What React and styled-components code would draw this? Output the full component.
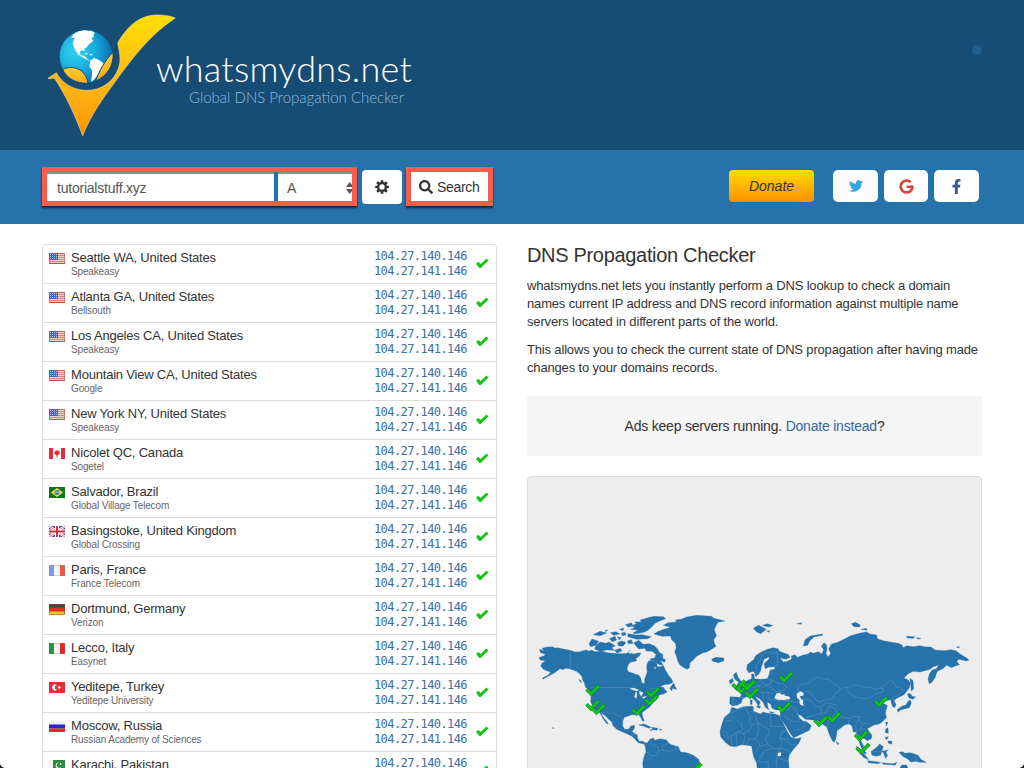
import React from 'react';
import styled, { createGlobalStyle } from 'styled-components';
import { FaTwitter, FaGoogle, FaFacebookF, FaSearch } from 'react-icons/fa';

const GlobalStyle = createGlobalStyle`
  * { box-sizing: border-box; }
  html, body { margin: 0; height: 768px; overflow: hidden; background: #111; }
  body { font-family: "Liberation Sans", Arial, sans-serif; font-size: 13px; color: #333; }
`;

const Page = styled.div`
  height: 768px;
  overflow: hidden;
  background: #fff;
  border-radius: 0 0 5px 5px;
`;

const Header = styled.header`
  height: 150px;
  padding: 0 42px 0 40px;
  display: flex;
  background: #174d74;
`;

const Logo = styled.svg`
  width: 145px;
  height: 150px;
  margin-right: -29px;
  flex: none;
`;

const Brand = styled.div`
  padding-top: 48px;
  font-family: Lato, "Open Sans", sans-serif;
  font-weight: 300;
`;

const BrandName = styled.div`
  width: 260px;
  white-space: nowrap;
  font-size: 36px;
  line-height: 41px;
  letter-spacing: 0.25px;
  color: #fff;
`;

const Tagline = styled.div`
  padding-left: 33px;
  white-space: nowrap;
  font-size: 15px;
  line-height: 16px;
  letter-spacing: 0;
  color: #8db9de;
`;

const Dot = styled.span`
  width: 10px;
  height: 10px;
  margin: 45px 0 0 auto;
  border-radius: 50%;
  background: #1f5f8f;
`;

const SearchBar = styled.div`
  height: 74px;
  padding: 17px 45px 0 42px;
  display: flex;
  align-items: flex-start;
  background: #2672aa;
`;

const Highlight = styled.div`
  width: ${(p) => p.$width}px;
  height: 39px;
  display: flex;
  gap: 4px;
  border: 5px solid #fb5b4c;
  box-shadow: 0 2px 2px rgba(0, 15, 35, 0.8);
`;

const Field = styled.div`
  width: ${(p) => p.$width}px;
  height: 29px;
  padding: 2px 0 0 ${(p) => p.$pad}px;
  display: flex;
  align-items: center;
  justify-content: space-between;
  background: #fff;
  box-shadow: inset 0 2px 1px #8a8a8a;
  font-size: 14px;
  letter-spacing: -0.22px;
  color: #555;
`;

const Arrows = styled.svg`
  width: 6px;
  height: 14px;
`;

const GearButton = styled.button`
  width: 40px;
  height: 34px;
  margin: 3px 4px 0 5px;
  padding: 0 0 1px;
  display: grid;
  place-items: center;
  border: 0;
  border-radius: 4px;
  background: #fff;
`;

const SearchButton = styled.button`
  width: 77px;
  height: 29px;
  padding: 0 0 0 8px;
  display: flex;
  align-items: center;
  gap: 4px;
  border: 0;
  background: #fff;
  font: 14px "Liberation Sans", Arial, sans-serif;
  letter-spacing: -0.3px;
  color: #333;
`;

const Donate = styled.button`
  width: 85px;
  height: 32px;
  margin: 3px 19px 0 auto;
  border: 0;
  border-radius: 4px;
  background: linear-gradient(#ffdc00, #ff9000);
  font: italic 14px "Liberation Sans", Arial, sans-serif;
  color: #333;
`;

const Social = styled.div`
  margin-top: 3px;
  display: flex;
  gap: 6px;
`;

const SocialButton = styled.a`
  width: ${(p) => p.$width || 45}px;
  height: 32px;
  display: grid;
  place-items: center;
  border-radius: 5px;
  background: #fff;
  color: ${(p) => p.$color};
  font-size: 16px;
`;

const Content = styled.main`
  padding: 20px 42px 0;
  display: flex;
  gap: 30px;
`;

const ServerList = styled.ul`
  width: 455px;
  margin: 0;
  padding: 0;
  list-style: none;
  border: 1px solid #ddd;
  border-radius: 4px;
`;

const ServerRow = styled.li`
  height: 39px;
  padding: 4px 7px 0 6px;
  display: flex;
  border-bottom: 1px solid #ddd;
`;

const Flag = styled.svg`
  width: 16px;
  height: 11px;
  margin: 4px 6px 0 0;
  flex: none;
`;

const Place = styled.div`
  flex: 1;
  line-height: 18px;
  font-size: 13px;
  letter-spacing: -0.2px;
  white-space: nowrap;
`;

const Provider = styled.div`
  font-size: 10px;
  line-height: 11px;
  margin-top: -1px;
  letter-spacing: -0.15px;
  color: #666;
`;

const Addresses = styled.div`
  font-family: "DejaVu Sans Mono", monospace;
  font-size: 12px;
  line-height: 15px;
  letter-spacing: -0.58px;
  color: #3a6ea5;
`;

const ListCheck = styled.svg`
  width: 13px;
  height: 11px;
  margin: 9px 0 0 9px;
`;

const Info = styled.section`
  width: 455px;
`;

const Title = styled.h1`
  margin: 0 0 11px;
  font-size: 20px;
  font-weight: 400;
  line-height: 22px;
  letter-spacing: -0.32px;
  color: #333;
`;

const Paragraph = styled.p`
  margin: 0 0 10px;
  font-size: 13px;
  line-height: 18px;
  letter-spacing: -0.165px;
  white-space: nowrap;
`;

const Notice = styled.div`
  height: 60px;
  margin: 19px 0 20px;
  display: flex;
  align-items: center;
  justify-content: center;
  background: #f5f5f5;
  font-size: 14px;
  letter-spacing: -0.21px;
  white-space: pre;
`;

const Link = styled.a`
  color: #3465a4;
`;

const MapPanel = styled.div`
  height: 400px;
  border: 1px solid #ddd;
  border-radius: 4px;
  background: #ededed;
  overflow: hidden;
`;

const MapSvg = styled.svg`
  display: block;
  width: 453px;
  height: 291px;
`;

const flagArt = {
  us: (
    <>
      <rect width="16" height="11" fill="#fff" />
      <path d="M0 .8H16M0 2.8H16M0 4.8H16M0 6.8H16M0 8.8H16M0 10.5H16" stroke="#d8534b" />
      <rect width="9" height="7" fill="#3d66cf" />
      <path d="M1 1.5H9M1 3.5H9M1 5.5H9" stroke="#cbdcff" strokeWidth=".8" strokeDasharray="1 1" />
      <rect x=".5" y=".5" width="15" height="10" fill="none" stroke="#a65243" strokeOpacity=".55" />
    </>
  ),
  ca: (
    <>
      <rect width="16" height="11" fill="#d9303b" />
      <rect x="4" width="8" height="11" fill="#fff" />
      <path d="M8 1.5l1 1.7 1.8-.5-.6 2 .8.7-2.4 1.8-.3 2h-.6l-.3-2L5 5.400l.8-.7-.6-2 1.800.5z" fill="#e52b35" />
    </>
  ),
  br: (
    <>
      <rect width="16" height="11" fill="#12751d" />
      <path d="M8 1l6 4.500-6 4.500-6-4.500z" fill="#eee438" />
      <circle cx="8" cy="5.500" r="2.500" fill="#3e7cbb" />
      <path d="M6 5q2-.7 4 1" stroke="#fff" strokeWidth=".6" fill="none" />
    </>
  ),
  gb: (
    <>
      <rect width="16" height="11" fill="#41549d" />
      <path d="M0 0L16 11M16 0L0 11" stroke="#fff" strokeWidth="2.400" />
      <path d="M0 0L16 11M16 0L0 11" stroke="#da4b55" strokeWidth=".8" />
      <path d="M8 0V11M0 5.500H16" stroke="#fff" strokeWidth="4" />
      <path d="M8 0V11M0 5.500H16" stroke="#d52b3b" strokeWidth="2" />
    </>
  ),
  fr: (
    <>
      <rect width="16" height="11" fill="#f4f4f4" />
      <rect width="5" height="11" fill="#7b9be5" />
      <rect x="11" width="5" height="11" fill="#ef5645" />
      <rect x=".5" y=".5" width="15" height="10" fill="none" stroke="#888" strokeOpacity=".3" />
    </>
  ),
  de: (
    <>
      <rect width="16" height="11" fill="#444" />
      <rect y="3.500" width="16" height="4" fill="#e52c20" />
      <rect y="7.500" width="16" height="3.500" fill="#f3c429" />
      <rect x=".5" y=".5" width="15" height="10" fill="none" stroke="#8b4932" strokeOpacity=".5" />
    </>
  ),
  it: (
    <>
      <rect width="16" height="11" fill="#f4f4f4" />
      <rect width="5" height="11" fill="#239637" />
      <rect x="11" width="5" height="11" fill="#e52621" />
      <rect x=".5" y=".5" width="15" height="10" fill="none" stroke="#777" strokeOpacity=".3" />
    </>
  ),
  tr: (
    <>
      <rect width="16" height="11" fill="#e82c31" />
      <path d="M8 3.200A3 3 0 1 0 8 7.800A2.300 2.300 0 1 1 8 3.200" fill="#fff" />
      <circle cx="10.300" cy="5.500" r="1.300" fill="#fff" />
    </>
  ),
  ru: (
    <>
      <rect width="16" height="11" fill="#ececec" />
      <rect y="3.500" width="16" height="4" fill="#2325df" />
      <rect y="7.500" width="16" height="3.500" fill="#e52828" />
    </>
  ),
  pk: (
    <>
      <rect width="16" height="11" fill="#2d8b3b" />
      <rect width="4" height="11" fill="#eee" />
      <path d="M10 2.500A3 3 0 1 0 12.500 6.500A2.600 2.600 0 1 1 10 2.500" fill="#fff" />
      <circle cx="11.500" cy="4" r=".9" fill="#fff" />
    </>
  ),
};

const servers = [
  ['us', 'Seattle WA, United States', 'Speakeasy'],
  ['us', 'Atlanta GA, United States', 'Bellsouth'],
  ['us', 'Los Angeles CA, United States', 'Speakeasy'],
  ['us', 'Mountain View CA, United States', 'Google'],
  ['us', 'New York NY, United States', 'Speakeasy'],
  ['ca', 'Nicolet QC, Canada', 'Sogetel'],
  ['br', 'Salvador, Brazil', 'Global Village Telecom'],
  ['gb', 'Basingstoke, United Kingdom', 'Global Crossing'],
  ['fr', 'Paris, France', 'France Telecom'],
  ['de', 'Dortmund, Germany', 'Verizon'],
  ['it', 'Lecco, Italy', 'Easynet'],
  ['tr', 'Yeditepe, Turkey', 'Yeditepe University'],
  ['ru', 'Moscow, Russia', 'Russian Academy of Sciences'],
  ['pk', 'Karachi, Pakistan', ''],
];

const pins = [
  [593, 690], [593, 705], [598.500, 709], [653, 692], [651.500, 700], [638.500, 710],
  [739, 685], [743, 688], [749, 685], [752, 693], [786, 677], [784, 707],
  [821, 721], [834, 717], [695, 768], [881, 701.500], [861.500, 735.500], [863, 748.500],
];

function BrandLogo() {
  return (
    <Logo viewBox="30 0 435 450">
      <defs>
        <linearGradient id="gold" x1="0" y1="0" x2="0" y2="1">
          <stop offset="0" stopColor="#ffdf00" />
          <stop offset=".55" stopColor="#ffb818" />
          <stop offset="1" stopColor="#ff9400" />
        </linearGradient>
        <linearGradient id="patch" x1="0" y1="0" x2="0" y2="1">
          <stop offset="0" stopColor="#ffcf28" />
          <stop offset="1" stopColor="#ffa81e" />
        </linearGradient>
        <radialGradient id="ocean" cx=".3" cy=".4" r=".75">
          <stop offset="0" stopColor="#32d5ee" />
          <stop offset=".55" stopColor="#16a7db" />
          <stop offset="1" stopColor="#0865a8" />
        </radialGradient>
      </defs>
      <circle cx="168" cy="169" r="79" fill="url(#ocean)" />
      <path fill="#fff" d="M130 103L146 94 166 91 176 93 174 100 188 102 192 112 184 113 190 123 178 131 171 141 163 146 164 154 155 150 149 157 153 166 163 167 173 178 182 183 174 181 160 173 145 164 133 145 128 128 135 113 124 114zM165 94L184 92 194 98 190 107 179 104zM181 182L191 174 203 178 212 184 221 190 217 203 209 211 205 222 192 239 183 246 186 226 186 211 178 199zM162 159L174 160 171 164zM177 161L188 163 184 167z" />
      <path d="M98 208C128 195 166 204 174 250C140 251 110 236 98 208z" fill="url(#patch)" stroke="#124c77" strokeWidth="3" />
      <path d="M249 157C253 198 229 229 197 243C207 213 227 178 249 157z" fill="url(#patch)" stroke="#124c77" strokeWidth="3" />
      <path
        d="M54 235L79 218C97 251 132 271 171 271C226 271 269 228 270 177C270 157 265 144 263 129C293 77 330 45 381 45C404 45 425 49 436 54C358 105 304 178 244 261C202 318 172 368 158 408C139 353 104 279 74 236C67 230 61 241 54 235z"
        fill="url(#gold)"
        stroke="#ffe79a"
        strokeWidth="1.500"
      />
    </Logo>
  );
}

function Gear() {
  return (
    <svg width="14" height="14" viewBox="-7 -7 14 14">
      {[0, 45, 90, 135].map((a) => (
        <rect key={a} x="-1.350" y="-6.800" width="2.700" height="13.600" rx=".5" fill="#333" transform={`rotate(${a})`} />
      ))}
      <circle r="5" fill="#333" />
      <circle r="2.700" fill="#fff" />
    </svg>
  );
}

function WorldMap() {
  return (
    <MapSvg viewBox="528 477 453 291">
      {/* The Americas and Greenland */}
      <g transform="translate(520 600) scale(.33333)">
        <g fill="#2672aa" stroke="#2672aa" strokeWidth="1" strokeLinejoin="round">
          <path d="M58 148L72 152 66 145 78 142 98 140 104 144 112 143 130 147 150 151 165 156 180 155 188 152 200 150 206 154 214 150 225 155 245 153 262 158 280 160 300 161 322 160 328 150 336 158 340 162 352 160 362 158 360 166 355 170 345 178 334 183 325 194 321 206 325 215 335 218 345 222 357 226 362 234 366 250 374 250 374 238 378 226 382 216 380 204 381 192 385 184 396 180 400 184 410 188 412 200 422 200 430 196 436 210 445 225 455 238 459 246 450 252 432 254 420 260 430 262 436 270 442 276 430 282 420 284 412 290 410 298 402 305 396 312 388 322 376 330 366 338 368 350 373 362 368 364 362 352 355 342 345 344 335 344 325 348 313 352 308 364 308 378 314 388 326 388 332 378 344 376 342 388 336 394 345 402 352 404 353 416 358 424 368 424 376 428 370 432 355 428 345 418 335 408 322 402 308 396 290 388 278 376 276 366 266 358 256 347 243 338 250 352 260 364 265 371 260 371 250 358 243 344 236 334 226 330 218 318 212 305 213 290 216 282 210 272 200 262 195 252 188 240 186 230 180 222 170 214 158 210 148 206 135 205 130 209 120 206 112 212 104 218 90 226 70 237 66 235 84 226 92 216 80 212 70 208 62 198 66 190 76 182 60 180 58 172 72 168 76 163 62 158z" />
          <path d="M372 430L382 428 390 418 400 414 404 421 420 416 440 420 446 430 455 434 475 440 482 456 500 458 520 466 536 478 540 492 532 510 370 510 368 490 372 470 378 456 376 440z" />
          <path d="M402 102L415 94 432 88 452 82 430 76 444 68 470 66 466 60 485 57 500 51 530 46 575 49 581 55 615 63 594 67 588 77 583 88 586 99 590 107 581 119 583 129 588 139 576 147 562 155 548 159 530 169 520 180 510 188 508 203 502 208 492 203 480 195 473 183 470 170 464 156 469 143 466 130 455 119 451 108 427 109z" />
          <path d="M384 53L402 49 430 50 437 56 420 62 405 70 396 80 385 90 372 97 348 101 338 99 354 91 331 88 346 82 332 78 350 71 344 66 364 65 360 60z" />
          <path d="M316 74L334 68 338 76 326 82zM298 88L312 84 309 92zM220 104L240 94 260 99 240 107zM256 91L264 90 257 95zM271 98L288 95 300 102 281 106zM304 99L315 97 318 105 306 107zM324 101L348 105 366 104 394 110 383 116 350 118 323 110zM268 116L285 109 290 120 277 125zM292 110L304 113 298 120zM207 131L216 117 236 124 229 136 212 140zM226 140L240 126 258 130 268 126 286 138 275 143 284 151 260 150 240 154 224 147zM292 128L304 123 318 127 310 138 296 138zM322 123L334 119 339 130 326 132zM284 151L301 145 306 153 291 159zM341 129L356 121 370 133 388 131 404 138 412 146 418 157 429 164 428 174 437 180 433 187 420 181 429 194 420 195 402 184 389 176 404 174 408 163 396 154 379 153 374 145 356 147zM330 170L346 173 350 182 333 187zM176 238L184 243 183 248zM193 252L211 269 198 263zM449 265L461 249 470 269 458 265 455 272zM356 375L372 372 394 382 387 385 369 378zM396 382L414 385 411 391 397 389zM417 388L424 387 424 391zM389 389L397 389 394 392zM98 382L102 384 99 387z" />
        </g>
        <g fill="#ededed">
          <path d="M328 266L340 263 357 269 350 274zM346 278L351 276 350 295 343 292zM358 272L370 278 364 289 358 281zM365 291L382 288 386 284 371 296zM401 199L408 204 406 208zM325 151L337 155 340 160 326 160z" />
        </g>
        <path fill="none" stroke="#80acd0" strokeWidth="1" d="M151 152V206L164 212 184 228M209 262H326L344 266 358 271M243 338L260 336 270 341 281 339 292 347 302 350 311 364M390 267L404 265 414 272 423 260M337 408L341 398 351 398M388 420L398 436 412 438 416 452 409 468 386 464M416 452L428 451 426 438 446 430M428 451L446 455 466 448 466 437M466 448L480 447M380 480L396 475 404 464M376 455L388 460" />
      </g>

      {/* Europe, Africa and Asia */}
      <g transform="translate(680 600) scale(.33333)">
        <g fill="#2672aa" stroke="#2672aa" strokeWidth="1" strokeLinejoin="round">
          <path d="M150 290L180 292 184 285 182 275 165 262 178 257 190 250 205 240 215 236 215 222 222 222 224 236 240 238 262 236 268 222 270 210 284 208 284 200 265 202 256 206 252 200 253 190 266 178 268 170 252 178 246 196 246 206 236 222 228 230 222 214 206 218 200 208 202 194 222 178 226 168 240 158 262 148 280 143 294 146 298 154 326 164 330 172 318 178 300 174 310 186 322 184 335 177 334 168 345 164 352 172 370 165 385 162 390 156 400 160 415 155 425 162 431 149 424 139 432 128 440 135 441 148 438 161 445 171 452 160 446 147 454 132 470 128 492 118 510 108 530 102 545 98 560 96 570 102 590 105 592 116 610 122 630 126 655 130 665 134 670 143 680 137 700 140 720 137 738 141 753 141 765 150 795 152 812 149 828 152 840 162 860 174 867 180 859 183 837 178 830 184 838 194 825 198 815 203 800 196 788 206 772 214 768 224 766 232 756 246 748 252 744 238 748 222 756 210 769 206 776 196 760 200 750 208 735 212 720 216 700 214 685 221 672 234 685 240 691 250 688 263 681 273 672 284 660 290 648 296 642 302 648 313 645 322 638 320 634 308 632 299 618 302 608 310 622 316 619 329 616 340 620 352 610 362 598 372 580 376 570 382 562 386 568 396 576 406 574 416 562 422 554 416 548 414 542 422 550 436 553 452 560 460 553 461 546 446 540 434 536 420 538 408 531 402 527 396 520 396 516 378 508 372 495 374 485 382 471 392 469 410 464 426 458 424 450 408 445 395 440 380 432 376 415 363 397 360 376 358 361 345 354 348 368 363 380 365 394 377 388 391 365 402 341 413 330 399 320 382 304 358 300 346 304 330 288 330 276 325 272 312 262 307 263 319 267 330 256 322 249 307 240 297 226 289 230 296 241 306 236 319 227 304 212 290 200 290 187 297 184 309 173 315 158 318 149 311z" />
          <path d="M155 322L172 327 190 320 217 318 221 324 219 333 241 342 250 336 262 340 285 342 300 348 306 362 315 380 326 402 334 412 347 416 364 413 356 430 340 448 328 465 325 480 328 510 232 510 230 490 221 470 217 452 215 438 200 436 185 434 165 440 150 438 135 426 122 410 120 395 125 375 133 352 150 338z" />
          <path d="M95 177L108 172 131 174 132 182 115 188 98 184zM160 224L169 217 174 232 187 248 192 255 168 260 176 247 164 237zM147 242L158 235 160 245 151 252zM220 85L236 76 246 81 259 88 242 101 230 96zM247 76L263 71 278 77 265 81zM260 93L269 92 268 97zM350 71L365 68 364 73zM370 138L375 119 391 108 427 102 428 106 402 111 389 123 383 136zM232 317L242 319 240 325 230 322zM211 299L217 300 216 313 211 314zM267 335L283 337 275 340zM300 336L307 333 303 339zM468 425L477 430 474 435zM514 71L527 67 541 75 539 81 522 80zM543 88L559 85 561 91zM679 109L704 110 700 115 682 114zM708 113L723 115 716 118zM829 141L839 140 836 144zM690 235L699 242 701 266 694 274 692 254zM682 283L690 280 697 289 707 291 698 298 687 294zM690 300L694 309 688 323 672 327 661 330 655 337 651 329 667 318 677 316 684 304zM617 366L624 367 619 378zM617 386L624 384 625 400 616 398zM615 412L625 410 620 420zM624 423L635 423 636 433 625 430zM528 438L540 447 557 467 566 479 550 472 539 459zM573 455L590 442 599 432 610 440 605 454 602 466 588 469 576 465zM604 454L625 450 618 456 623 467 616 475 611 459zM563 482L591 485 602 488 594 491 565 488zM605 488L623 490 648 492 644 495 610 493zM657 457L668 455 674 460 690 458 713 465 724 479 739 487 720 487 707 484 693 486 682 476 668 469zM637 493L651 487 645 496zM665 495L680 495 683 504 660 504z" />
        </g>
        <g fill="#ededed">
          <path d="M283 294L290 280 300 278 305 284 316 281 312 286 329 290 330 297 311 300 292 299zM350 281L361 274 371 279 370 287 360 289 363 297 370 301 369 311 373 317 362 315 358 309 359 301 351 293zM294 459L304 457 302 468 293 469zM354 342L363 350 369 358 361 355zM245 198L254 196 251 216 242 214z" />
        </g>
        <g fill="none" stroke="#85b0d3" strokeWidth="1" strokeLinejoin="round">
          <path d="M160 292V315M180 292L195 293M194 248L208 258 207 275 198 289M208 258L225 263 238 257 249 262 260 256 276 264M217 238L220 252 240 257M240 237L250 252 270 254 276 240 264 235M238 257L235 270 215 271M235 270L248 279 264 276 281 282M248 279L250 300M264 276L265 297 285 300M276 240L294 250 309 249 320 262 310 273 287 274 276 264M229 221L228 199 240 181 247 165 263 155 277 160 293 155M285 208L270 211M282 217L270 222M292 155V190L285 204M245 212L248 218" />
          <path d="M285 300L302 302 325 302 333 316 326 329 309 330 304 338M333 316L345 325 357 350M325 302L350 308 358 304M313 347L334 363 349 367 360 357M340 391L360 389 374 379 377 364M358 281L353 263 364 252 387 250 399 236 418 232 433 238 448 237 460 249 474 259 483 269 494 262 508 264 522 254 538 257 552 262 568 261 589 268 608 261 620 250 631 240 641 247 646 259 658 262 669 269 661 280 649 289M375 273L393 278 403 296 420 306 440 297 457 297 465 281 482 269M369 296L391 301 405 317 423 322 424 340 405 346 376 354M424 340L437 339 447 317 466 326 474 344 490 353 508 355 522 350 541 350 535 358 547 373 557 369 570 372M423 322L436 309 454 311 470 316M445 383L440 371 455 356 466 340M494 262L509 279 526 291 548 295 568 294 590 282 609 275 611 268 602 265M510 356L505 371M535 358L526 377 530 397M547 373L542 389 553 386 565 399 550 403 545 414M634 300L645 288M640 308L648 306M579 455L602 454M708 464V486" />
          <path d="M134 352H153V362H136M153 345L185 372 188 389 173 396 155 408 145 416 129 404M153 338L170 331 195 320M195 320L202 335 211 350 207 362 218 373 235 370 268 388M218 373L208 391 190 401 173 396M219 333L229 347 229 362 235 370M272 341V379H319M268 388L267 403 257 414 262 432 279 445 298 446M235 370L236 397 226 416 205 418 200 436M190 401L195 414 188 435M226 416L237 426 239 439 226 456M239 439L254 435 262 432M298 446L307 427 299 415 307 395 322 391M299 415L322 418 334 412M298 446L324 449 330 461M298 446L291 462 289 480 291 504M279 445L264 449 250 455 245 470 235 475M154 412V435M170 401V435M125 394L142 397 145 416M230 482L249 487 264 485 265 503M294 472L313 482 325 482M318 421L334 434 347 432" />
        </g>
      </g>
      {pins.map(([x, y], i) => (
        <path
          key={i}
          transform={`translate(${x} ${y})`}
          d="M-7.200 .6L-5.200-1.600-2 1.600 4.700-5.300 7.300-3.100-2.100 5.800z"
          fill="#10c61a"
          stroke="#087d20"
          strokeWidth=".7"
        />
      ))}
    </MapSvg>
  );
}

export default function App() {
  return (
    <>
      <GlobalStyle />
      <Page>
        <Header>
          <BrandLogo />
          <Brand>
            <BrandName>whatsmydns.net</BrandName>
            <Tagline>Global DNS Propagation Checker</Tagline>
          </Brand>
          <Dot />
        </Header>
        <SearchBar>
          <Highlight $width={315}>
            <Field $width={227} $pad={10}>tutorialstuff.xyz</Field>
            <Field $width={74} $pad={9}>
              A
              <Arrows viewBox="0 0 6 14">
                <path d="M0 6L3.700 1 6 4V6zM0 8H6V10L3.700 13z" fill="#555" />
              </Arrows>
            </Field>
          </Highlight>
          <GearButton><Gear /></GearButton>
          <Highlight $width={87}>
            <SearchButton><FaSearch size={14} />Search</SearchButton>
          </Highlight>
          <Donate>Donate</Donate>
          <Social>
            <SocialButton $color="#35a6de"><FaTwitter size={14} /></SocialButton>
            <SocialButton $color="#d34836" $width={44}><FaGoogle size={15} /></SocialButton>
            <SocialButton $color="#3b5998"><FaFacebookF size={15} /></SocialButton>
          </Social>
        </SearchBar>
        <Content>
          <ServerList>
            {servers.map(([flag, place, provider]) => (
              <ServerRow key={place}>
                <Flag viewBox="0 0 16 11">{flagArt[flag]}</Flag>
                <Place>
                  {place}
                  <Provider>{provider}</Provider>
                </Place>
                <Addresses>104.27.140.146<br />104.27.141.146</Addresses>
                <ListCheck viewBox="0 0 13 11">
                  <path d="M.1 5.900L2.200 3.800 4.600 6 10.600 .4 12.400 2.400 4.700 10.100 3.300 10.100z" fill="#14c514" />
                </ListCheck>
              </ServerRow>
            ))}
          </ServerList>
          <Info>
            <Title>DNS Propagation Checker</Title>
            <Paragraph>
              whatsmydns.net lets you instantly perform a DNS lookup to check a domain<br />
              names current IP address and DNS record information against multiple name<br />
              servers located in different parts of the world.
            </Paragraph>
            <Paragraph>
              This allows you to check the current state of DNS propagation after having made<br />
              changes to your domains records.
            </Paragraph>
            <Notice>Ads keep servers running. <Link>Donate instead</Link>?</Notice>
            <MapPanel><WorldMap /></MapPanel>
          </Info>
        </Content>
      </Page>
    </>
  );
}
